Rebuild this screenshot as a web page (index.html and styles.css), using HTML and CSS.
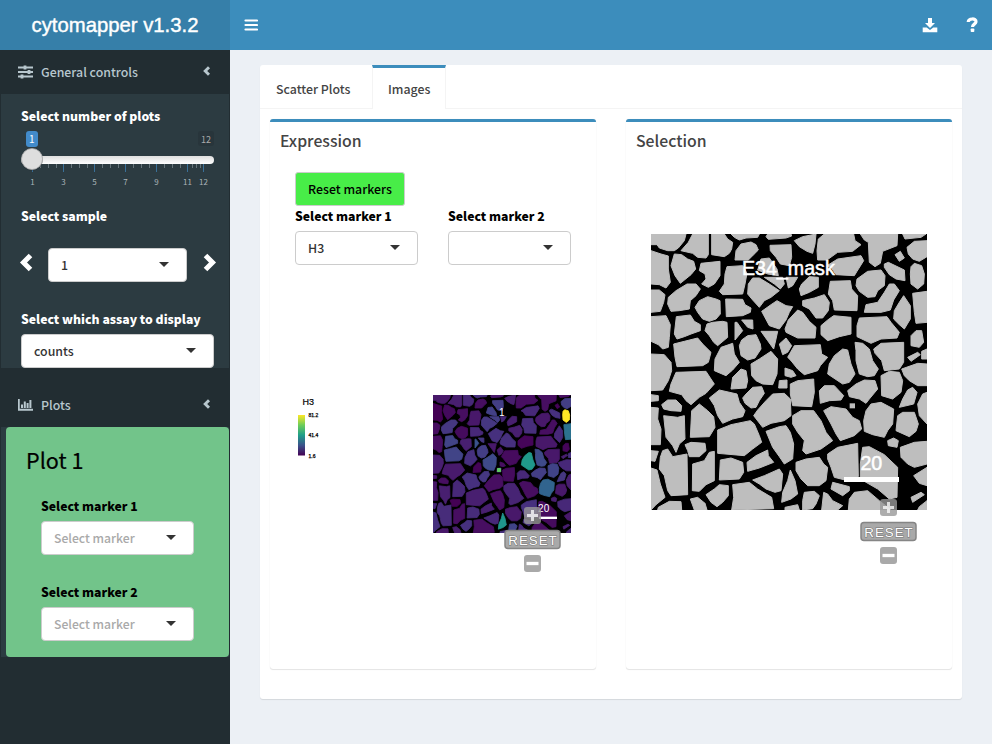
FILE: index.html
```html
<!DOCTYPE html>
<html lang="en">
<head>
<meta charset="utf-8">
<title>cytomapper</title>
<link rel="stylesheet" href="styles.css">
</head>
<body>
<header class="header">
  <div class="logo">cytomapper v1.3.2</div>
  <nav class="navbar">
    <svg class="nav-icon" width="14" height="14" viewBox="0 0 14 14"><path d="M1.500 2.500H13M1.500 7H13M1.500 11.500H13" stroke="#fff" stroke-width="2.200" stroke-linecap="round"/></svg>
    <span class="spacer"></span>
    <svg class="nav-icon" width="16" height="16" viewBox="0 0 16 16"><path fill="#fff" d="M6 1h4v5h3L8 11 3 6h3zM.7 10.500h4L8 13l3.300-2.500h4v4.800H.7z"/></svg>
    <svg class="nav-icon help" width="12" height="16" viewBox="0 0 12 16"><path d="M2.200 5C2.500 1 10.300 1 10 4.800 9.700 7.300 6.500 7 6.500 10" stroke="#fff" stroke-width="3.200" fill="none"/><rect x="4.700" y="11.500" width="3.600" height="3.500" rx=".8" fill="#fff"/></svg>
  </nav>
</header>
<div class="wrapper">
  <aside class="sidebar">
    <div class="menu-item">
      <svg width="15" height="14" viewBox="0 0 15 14"><path d="M0 2.500h15M0 7h15M0 11.500h15" stroke="#b8c7ce" stroke-width="1.900"/><path d="M7 .5v4M11 5v4M4 9.500v4" stroke="#b8c7ce" stroke-width="2.800"/></svg>
      <span class="menu-text">General controls</span>
      <svg class="angle" width="8" height="10" viewBox="0 0 8 10"><path d="M6 1.200 2.200 5 6 8.800" stroke="#b8c7ce" stroke-width="2.900" fill="none"/></svg>
    </div>
    <div class="submenu general">
      <label class="label white">Select number of plots</label>
      <svg class="slider" id="slider" width="200" height="62" viewBox="0 0 200 62">
        <defs><linearGradient id="track" x2="0" y2="1"><stop offset="0" stop-color="#dedede"/><stop offset="1" stop-color="#fff"/></linearGradient></defs>
        <g id="ticks"></g>
        <rect x="6" y="2" width="12" height="16" rx="3" fill="#428bca"/>
        <text class="slider-value" x="11.700" y="14">1</text>
        <rect x="178" y="2" width="16" height="15" rx="3" fill="#28353b"/>
        <text class="slider-max" x="186" y="13.500">12</text>
        <rect x="1" y="27" width="193" height="8" rx="4" fill="url(#track)"/>
        <circle cx="12" cy="30.800" r="10.800" fill="#1f2b30" opacity=".45"/>
        <circle cx="12" cy="30" r="10.500" fill="#dedede" stroke="#aaa" stroke-width=".8"/>
      </svg>
      <label class="label white sample">Select sample</label>
      <div class="sample-row">
        <svg width="15" height="20" viewBox="0 0 15 20"><path d="M12.500 2.500 5.500 9.500l7 7" stroke="#fff" stroke-width="5" fill="none"/></svg>
        <div class="select"><span>1</span><i class="caret"></i></div>
        <svg width="15" height="20" viewBox="0 0 15 20"><path d="M3.500 2.500l7 7-7 7" stroke="#fff" stroke-width="5" fill="none"/></svg>
      </div>
      <label class="label white">Select which assay to display</label>
      <div class="select assay"><span>counts</span><i class="caret"></i></div>
    </div>
    <div class="menu-item plots">
      <svg width="15" height="14" viewBox="0 0 15 14"><path d="M.8 1v10.800H15" stroke="#b8c7ce" stroke-width="1.900" fill="none"/><path d="M4 10V6.500M6.800 10V3.500M9.600 10V5M12.400 10V2" stroke="#b8c7ce" stroke-width="2"/></svg>
      <span class="menu-text">Plots</span>
      <svg class="angle" width="8" height="10" viewBox="0 0 8 10"><path d="M6 1.200 2.200 5 6 8.800" stroke="#b8c7ce" stroke-width="2.900" fill="none"/></svg>
    </div>
    <div class="submenu plot-list">
      <section class="plot-card">
        <h3>Plot 1</h3>
        <div class="field"><label class="label">Select marker 1</label><div class="select empty"><span>Select marker</span><i class="caret"></i></div></div>
        <div class="field"><label class="label">Select marker 2</label><div class="select empty"><span>Select marker</span><i class="caret"></i></div></div>
      </section>
    </div>
  </aside>
  <main class="content">
    <div class="tab-box">
      <div class="tabs"><div class="tab">Scatter Plots</div><div class="tab active">Images</div></div>
      <div class="panels">
        <section class="box">
          <h3>Expression</h3>
          <button class="reset">Reset markers</button>
          <div class="markers">
            <div><label class="label">Select marker 1</label><div class="select"><span>H3</span><i class="caret"></i></div></div>
            <div><label class="label">Select marker 2</label><div class="select"><span></span><i class="caret"></i></div></div>
          </div>
          <div class="figures">
            <svg class="legend" width="60" height="80" viewBox="0 0 60 80">
              <defs><linearGradient id="viridis" x2="0" y2="1"><stop offset="0" stop-color="#fde725"/><stop offset=".25" stop-color="#6ccd5a"/><stop offset=".5" stop-color="#1f9e89"/><stop offset=".75" stop-color="#3b528b"/><stop offset="1" stop-color="#440154"/></linearGradient></defs>
              <text class="legend-title" x="7.500" y="15">H3</text>
              <rect x="3" y="25" width="7" height="40.500" fill="url(#viridis)"/>
              <text class="legend-value" x="13.500" y="27">81.2</text><text class="legend-value" x="13.500" y="47">41.4</text><text class="legend-value" x="13.500" y="68">1.6</text>
            </svg>
            <div class="expression-figure">
              <svg width="138" height="138" viewBox="0 0 828 828"><rect width="828" height="828"/><g id="expression"></g><text class="tile-number" x="412" y="126">1</text><rect x="636" y="730" width="108" height="14" fill="#fff"/><text class="tile-scale" x="664" y="704">20</text></svg>
              <svg class="zoom" width="58" height="70" viewBox="0 0 58 70"><use href="#zoom-controls"/></svg>
            </div>
          </div>
        </section>
        <section class="box selection">
          <h3>Selection</h3>
          <div class="mask-figure">
            <svg width="276" height="276" viewBox="0 0 828 828"><rect width="828" height="828"/><g id="mask" fill="#bebebe"></g><text class="mask-name" x="412" y="123">E34_mask</text><rect x="579" y="729" width="165" height="15" fill="#fff"/><text class="mask-scale" x="661" y="708">20</text></svg>
            <svg class="zoom" width="58" height="70" viewBox="0 0 58 70">
              <g id="zoom-controls">
                <rect x="20" y="0" width="17" height="17" rx="3" fill="#999" opacity=".8"/>
                <path d="M28.500 3v11M23 8.500h11" stroke="#fff" stroke-opacity=".75" stroke-width="3"/>
                <rect x="1" y="23.500" width="55" height="18" rx="3" fill="#a9a9a9" stroke="#858585" stroke-width="1.500"/>
                <text class="zoom-reset" x="29" y="37.500">RESET</text>
                <rect x="20" y="48" width="17" height="17" rx="3" fill="#a9a9a9"/>
                <path d="M22.500 56.500h12" stroke="#fff" stroke-width="3.300"/>
              </g>
            </svg>
          </div>
        </section>
      </div>
    </div>
  </main>
</div>
<script src="cells.js"></script>
</body>
</html>
```
FILE: styles.css
```css
* { box-sizing: border-box; }
body { margin: 0; height: 744px; overflow: hidden; background: #ecf0f5; color: #333; font: 500 12.35px/20px "Noto Sans CJK SC", sans-serif; }
svg { display: block; flex: none; }
.header { display: flex; height: 50px; }
.logo { width: 230px; background: #367fa9; color: #fff; font: 20.3px/50px "Liberation Sans", sans-serif; -webkit-text-stroke: .4px #fff; text-align: center; }
.navbar { flex: 1; display: flex; align-items: center; background: #3c8dbc; padding: 0 14px; }
.spacer { flex: 1; }
.help { margin-left: 28px; }
.wrapper { display: flex; height: 694px; }
.sidebar { width: 230px; background: #222d32; }
.menu-item { display: flex; align-items: center; height: 44px; padding: 0 19px 0 18px; color: #b8c7ce; }
.menu-text { flex: 1; padding-left: 8px; }
.menu-item.plots { margin-top: 15px; }
.angle { margin-bottom: 2px; }
.submenu { margin: 0 1px; background: #2c3b41; }
.general { height: 274px; padding: 12px 15px 0 20px; }
.label { display: block; height: 20px; color: #000; font-weight: 900; font-size: 12.23px; white-space: nowrap; }
.label.white { color: #fff; }
.slider { margin: 3px 0 0 -1px; }
.label.sample { margin-top: 15px; }
.sample-row { display: flex; align-items: center; justify-content: space-between; height: 34px; margin: 22px -3px 27px -3px; }
.sample-row svg { margin-bottom: 5px; }
.sample-row .select { width: 139px; }
.select { display: flex; align-items: center; justify-content: space-between; height: 34px; border: 1px solid #ccc; border-radius: 4px; background: #fff; padding: 0 17px 0 12px; color: #333; }
.select.empty { color: #a9a9a9; font-size: 12.2px; }
.caret { border: 5px solid transparent; border-top-color: #333; border-bottom: 0; margin-bottom: 1px; }
.assay { margin-top: 5px; }
.plot-list { padding-left: 5px; }
.plot-card { height: 230px; border-radius: 4px; background: #72c48a; padding: 18px 35px 0; }
h3 { margin: 0; font-weight: 500; }
.plot-card h3 { margin: 0 0 1px -15px; color: #000; font-size: 21.6px; line-height: 30px; font-weight: 400; -webkit-text-stroke: .2px #000; }
.field { height: 86px; padding-top: 20px; }
.field .select { margin-top: 5px; }
.content { flex: 1; padding: 15px 30px; }
.tab-box { height: 634px; border-radius: 3px; background: #fff; box-shadow: 0 1px 1px rgba(0,0,0,.1); }
.tabs { display: flex; height: 44px; border-bottom: 1px solid #f4f4f4; color: #444; }
.tab { width: 112px; padding: 14px 16px 0; white-space: nowrap; }
.tab.active { width: 74px; height: 44px; padding: 11px 14px 0 15px; border-top: 3px solid #3c8dbc; border-left: 1px solid #f4f4f4; border-right: 1px solid #f4f4f4; background: #fff; }
.panels { display: grid; grid-template-columns: 326px 326px; gap: 30px; padding: 10px; }
.box { height: 550px; border-top: 3px solid #3c8dbc; border-radius: 3px; background: #fff; box-shadow: 0 1px 1px rgba(0,0,0,.1), 0 0 1px rgba(0,0,0,.1); padding: 9px 25px 0; }
.box h3 { margin: 0 0 0 -15px; color: #444; font-size: 15.8px; line-height: 20px; }
.reset { display: block; width: 110px; height: 34px; margin-top: 21px; padding: 0; border: 1px solid #ccc; border-radius: 3px; background: #48ed48; color: #000; font: inherit; }
.markers { display: grid; grid-template-columns: 123px 123px; gap: 30px; }
.markers .select { margin-top: 5px; }
.figures { display: flex; justify-content: space-between; margin-top: 125px; }
.expression-figure { position: relative; width: 138px; height: 138px; margin-top: 5px; }
.expression-figure .zoom { position: absolute; left: 71px; top: 112px; }
.mask-figure { position: relative; width: 276px; margin-top: 83px; }
.mask-figure .zoom { position: absolute; left: 209px; top: 265px; }
#mask polygon { stroke: #bebebe; stroke-width: 3; stroke-linejoin: round; }
#expression polygon { stroke-width: 5; stroke-linejoin: round; }
text { font-family: "Liberation Sans", sans-serif; font-weight: 400; }
.slider-value, .slider-max, .tick-label { font-family: "Noto Sans CJK SC", sans-serif; text-anchor: middle; font-size: 10px; fill: #fff; }
.slider-max { font-size: 9px; fill: #aaa; }
.tick-label { font-size: 8px; fill: #aab4b8; }
.legend-title { font-size: 9px; fill: #000; stroke: #000; stroke-width: .2; }
.legend-value { font-size: 5px; fill: #000; stroke: #000; stroke-width: .25; }
.mask-name, .mask-scale { font-size: 59px; fill: #fff; stroke: #fff; stroke-width: 1.5; text-anchor: middle; }
.tile-number, .tile-scale { font-size: 60px; fill: #fff; text-anchor: middle; }
.zoom-reset { font-size: 13.3px; letter-spacing: 1px; text-anchor: middle; fill: #fff; stroke: #777; stroke-width: 1.2px; paint-order: stroke; }
```
FILE: cells.js
```js
// Cell outlines on an 828-unit square; an optional suffix sets the marker colour.
const cells = `0,0 105,0 100,20 82,42 70,50 50,50 25,42 18,32 0,32
125,0 172,0 172,62 165,72 140,70 125,58 90,50 112,25
182,0 220,0 230,15 245,25 242,45 235,58 220,68 182,62
240,0 325,0 320,10 285,12 265,18 250,10
270,30 300,24 315,32 322,48 308,62 292,78 252,78 255,50
350,0 420,0 422,6 405,12 352,16 345,8
357,34 420,32 422,70 415,95 388,90 375,70 358,50|#433e85
0,50 30,60 52,66 52,105 58,145 45,162 25,152 0,150|#440154
70,60 92,62 110,75 128,82 134,105 120,122 88,148 72,125 60,95|#430a5c
150,88 207,82 207,125 190,150 172,160 152,150 165,135 162,120 145,110
228,98 275,95 288,118 282,150 275,180 215,182 205,172 220,150 222,120
330,75 355,72 378,105 382,125 350,120 320,108|#424086
340,130 395,130 400,150 388,165 370,150|#433e85
305,132 325,132 355,150 385,170 360,190 340,200 325,220 305,198 290,180 292,150|#453781
0,168 25,168 42,182 38,205 28,232 0,235
52,190 75,170 108,150 135,150 148,165 135,185 118,200 115,225 85,230 60,232 50,210|#453781
145,200 170,188 195,195 207,200 208,240 195,255 175,262 155,255 140,235 132,220|#450b5d
224,195 275,196 282,212 300,222 298,235 275,245 226,248
332,232 360,212 378,200 405,215 425,218 415,235 405,258 385,285 355,275
0,248 45,245 58,272 55,310 52,340 35,345 22,332 0,322
76,248 118,243 130,262 148,272 148,290 120,300 100,308 78,315 70,300|#414487
168,270 185,265 215,262 228,265 230,310 200,335 188,325 175,305 162,290
252,265 258,265 275,290 252,318|#3b528b
272,258 305,258 306,285 290,280|#453781
290,305 315,302 328,330 330,345 312,372 290,378 270,365 265,335 272,318|#433e85
330,292 380,292 375,315 368,345 350,320
0,360 40,362 60,385 62,410 52,440 35,468 0,470
68,330 100,322 140,312 155,330 180,355 172,385 155,395 78,398 72,370|#414487
210,340 245,328 250,360 265,385 245,408 225,425 190,410 192,375
300,390 325,375 360,352 380,375 378,420 365,452 335,450 315,440 302,425|#3e4a89
385,330 405,312 422,335 410,355 395,362
430,20 455,8 495,0 492,30 485,58 468,52 445,38
502,15 520,0 608,0 612,20 630,32 605,52 560,55 528,78 500,78 498,50|#470e61
628,0 740,0 738,35 695,52 688,88 672,98 655,85 652,25 640,18|#470e61
755,0 825,0 810,10 762,15
768,40 790,22 828,20 828,68 805,82 785,75 772,60|#433e85
732,62 748,52 760,72 745,82|#450457
528,95 560,75 630,65 638,80 618,112 610,125 555,122 540,100
700,90 712,85 760,108 762,140 735,135 715,122 700,100
780,98 790,88 812,95 820,120 818,150 800,165 780,150 778,120|#fde725
618,135 650,112 690,108 702,125 700,155 680,170 672,188 650,190 625,172 615,155
452,150 475,128 502,130 502,160 475,175 450,185 445,165
405,130 440,130 425,155 412,162
538,142 598,140 602,165 620,185 618,230 550,228 545,200 532,180|#472e7c
715,150 730,150 745,170 728,198 718,228 690,235 640,235 645,212 680,205 700,175
785,178 828,172 828,265 795,268 790,235|#2c728e
455,200 490,192 520,182 535,205 532,230 515,252 495,252 475,225 455,215
730,230 745,205 758,185 778,215 778,255 760,285 745,272 728,255
402,285 412,258 440,228 455,235 475,262 495,280 492,312 440,312 405,295
510,275 530,258 548,245 600,250 600,300 565,308 530,320 510,302|#450559
625,252 708,248 720,265 745,295 738,312 690,315 660,328 618,308 618,275
780,305 795,290 812,290 818,325 805,340 780,335|#450559
430,335 508,332 512,360 530,370 508,395 500,410 460,422 440,405 420,380 410,370|#460b5e
575,345 590,348 600,390 612,420 595,445 575,450 530,420 535,390 550,365|#20998a
612,325 635,328 655,345 665,380 682,405 670,425 650,428 625,420 615,380 615,350|#3e4a89
668,345 690,328 758,325 758,385 745,405 700,410 692,380 672,358
770,370 800,355 808,362 780,382
752,405 800,388 828,390 828,455 800,455 775,440 760,425
812,352 828,345 828,375 812,375
402,402 425,410 435,425 420,430 402,425
75,415 165,412 178,432 190,450 165,478 145,490 120,512 105,500 92,482 55,472 60,450|#481a6c
245,430 270,405 285,410 290,440 285,462 240,465|#450457
285,480 305,460 332,458 340,478 325,500 315,520 300,522 282,508 275,492|#453781
175,492 205,468 258,480 265,505 282,530 275,548 245,555 215,568 200,545 190,515
32,512 50,498 75,498 92,515 90,532 60,530 38,525
0,520 22,522 20,555 30,585 28,632 0,632
38,545 80,550 100,545 102,615 85,630 75,655 65,635 45,610
122,530 145,510 170,530 188,548 192,580 175,608 118,610 120,570
200,588 240,572 298,560 310,570 325,605 332,625 305,645 280,665 200,658|#481f70
345,500 365,480 400,478 418,495 420,545 400,560 360,568 335,580 308,545 320,528
345,592 385,578 405,575 418,595 428,630 425,675 400,690 385,668 365,640|#470e61
385,440 408,438 408,462 383,462
102,632 120,625 162,628 165,650 145,668 115,668 110,650|#440154
35,650 50,645 65,668 108,660 110,782 60,785 50,770 40,725 25,705 28,670|#472c7a
125,690 160,680 175,655 190,652 190,740 165,752 145,772 124,770
208,678 240,672 275,685 278,715 265,735 205,738|#472c7a
288,685 315,665 350,648 352,665 368,685 325,702 290,712
305,738 340,725 385,705 395,720 390,770 372,775 345,765 325,750
165,782 190,765 205,752 232,755 232,785 215,805 198,818 180,805
245,752 295,745 320,765 362,790 368,824 242,828 248,790
22,820 55,802 90,803 92,828 20,828
118,795 140,790 162,808 168,828 130,828
0,650 22,652 12,682 0,680
0,702 18,708 28,750 42,790 15,812 0,828
410,740 418,708 432,740 440,780 420,795 392,805 395,775|#1f968b
0,482 22,485 22,500 0,502
418,450 440,440 488,435 490,475 482,518 425,515 418,480|#450b5d
505,470 520,455 550,455 578,485 570,498 535,500 508,508
590,470 615,450 640,438 672,440 680,465 655,495 645,508 625,495 595,488|#433e85
690,425 715,412 745,415 755,440 750,475 725,495 692,485|#404387
770,468 785,460 798,475 788,510 745,520 755,495|#453781
800,510 815,480 828,475 828,570 805,545
425,545 450,530 488,530 510,560 525,595 545,620 510,645 465,660 455,650 460,620 440,595 425,570|#472474
518,530 540,518 585,525 605,550 625,560 632,585 610,605 568,620 555,600 540,570|#470e61
645,530 660,510 690,505 728,525 725,570 710,590 700,610 665,602 640,592 638,560|#31648e
740,545 755,535 790,535 802,570 795,592 775,608 735,590
710,620 728,612 742,620 738,640 712,635
748,640 790,625 828,622 828,690 790,700 770,690 750,670
530,660 560,640 620,628 622,728 590,740 550,730 540,700 530,675
635,640 655,638 700,662 740,700 738,790 715,795 680,765 628,735 628,690|#450b5d
435,685 465,675 505,670 518,690 530,700 525,740 505,755 470,755 450,735 435,710
460,775 490,772 505,785 495,810 485,824 455,828 455,800|#404387
518,775 530,780 545,800 575,815 560,828 512,828
545,745 595,758 595,770 575,785 540,765
595,795 610,775 650,770 685,800 720,828 592,828
788,725 828,700 828,755 805,748
780,790 810,775 820,782 785,805
805,818 828,800 828,828 800,828
402,820 440,812 445,828 402,828`.split("\n");
const shades = ["#48186a", "#472878", "#470e61", "#481f70", "#46307e"];
let mask = "", expression = "";
cells.forEach((line, i) => {
  const [points, color] = line.split("|");
  const fill = color || shades[(i * 3) % 5];
  mask += `<polygon points="${points}"/>`;
  expression += `<polygon points="${points}" fill="${fill}" stroke="${fill}"/>`;
});
expression += '<rect x="384" y="438" width="24" height="24" rx="5" fill="#5ec962"/>';
mask += '<rect x="596" y="508" width="16" height="15"/>';
document.getElementById("mask").innerHTML = mask;
document.getElementById("expression").innerHTML = expression;

const labels = [1, 3, 5, 7, 9, 11, 12];
const majors = [12.5, 43.5, 74.5, 105.5, 136.5, 167.5, 183.5];
let ticks = "";
majors.forEach((x, i) => {
  ticks += `<rect x="${x - 0.5}" y="34" width="1" height="9" fill="#3a7098"/><text class="tick-label" x="${x}" y="56">${labels[i]}</text>`;
  if (i < majors.length - 1) {
    const step = (majors[i + 1] - x) / 4;
    for (let k = 1; k < 4; k++) ticks += `<rect x="${Math.round(x + step * k)}" y="34" width="1" height="5" fill="#66747a"/>`;
  }
});
document.getElementById("ticks").innerHTML = ticks;
```
